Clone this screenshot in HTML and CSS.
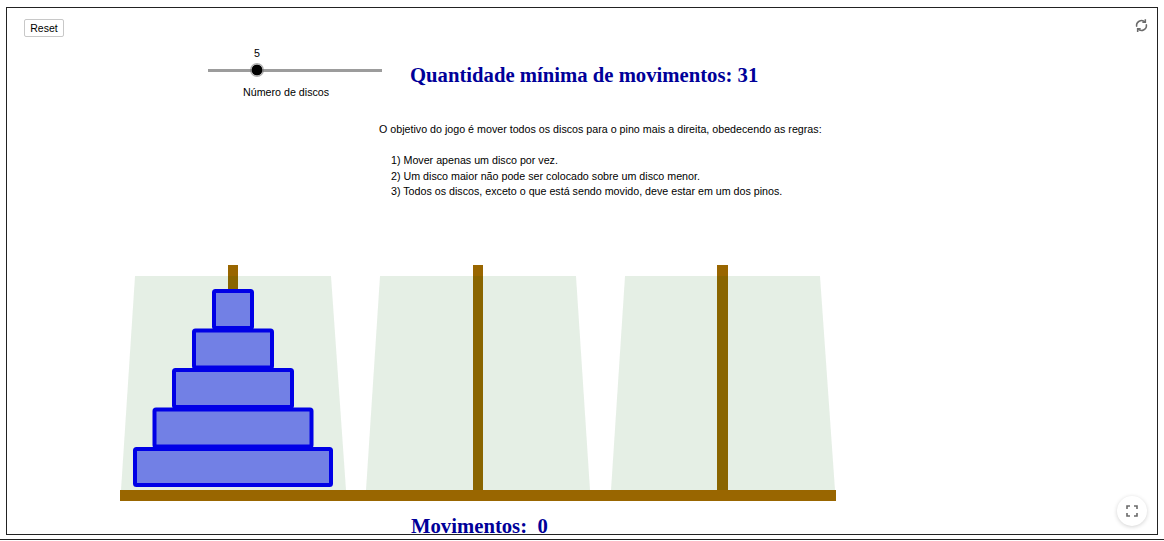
FILE: index.html
```html
<!DOCTYPE html>
<html lang="pt">
<head>
<meta charset="utf-8">
<title>Torre de Hanói</title>
<link rel="stylesheet" href="styles.css">
</head>
<body>
<div class="page">
  <div class="frame">
    <div class="toolbar">
      <button class="reset-btn" type="button">Reset</button>
    </div>

    <div class="header">
      <div class="slider">
        <div class="slider-value">5</div>
        <div class="slider-track"><span class="slider-knob"></span></div>
        <div class="slider-label">Número de discos</div>
      </div>
      <h1 class="title">Quantidade mínima de movimentos: 31</h1>
    </div>

    <div class="rules">
      <p class="line">O objetivo do jogo é mover todos os discos para o pino mais a direita, obedecendo as regras:</p>
      <p class="line blank">&nbsp;</p>
      <p class="line rule">1) Mover apenas um disco por vez.</p>
      <p class="line rule">2) Um disco maior não pode ser colocado sobre um disco menor.</p>
      <p class="line rule">3) Todos os discos, exceto o que está sendo movido, deve estar em um dos pinos.</p>
    </div>

    <svg class="board" width="716" height="236" viewBox="0 0 716 236" xmlns="http://www.w3.org/2000/svg">
      <!-- pegs -->
      <rect class="peg" x="108" y="0" width="10" height="26"/>
      <rect class="peg" x="353" y="0" width="10" height="226"/>
      <rect class="peg" x="597" y="0" width="11" height="226"/>
      <!-- trapezoid areas -->
      <polygon class="zone" points="15,11 211,11 226,225 1,225"/>
      <polygon class="zone" points="260,11 456,11 470,225 246,225"/>
      <polygon class="zone" points="505,11 700,11 715,225 491,225"/>
      <!-- base -->
      <rect class="base" x="0" y="225" width="716" height="11"/>
      <!-- disks -->
      <rect class="disk" x="15" y="184" width="196" height="36" rx="1.5"/>
      <rect class="disk" x="34.5" y="144.5" width="157" height="37" rx="1.5"/>
      <rect class="disk" x="54" y="105" width="118" height="37" rx="1.5"/>
      <rect class="disk" x="74" y="65.5" width="78" height="37" rx="1.5"/>
      <rect class="disk" x="94" y="26" width="38" height="37" rx="1.5"/>
    </svg>

    <div class="moves">Movimentos:  0</div>

    <button class="icon-btn refresh" type="button" aria-label="Recarregar">
      <svg width="17" height="17" viewBox="0 0 24 24" xmlns="http://www.w3.org/2000/svg">
        <path d="M5.3 13.8 A7 7 0 0 1 17 7.1" fill="none" stroke="#6b6b6b" stroke-width="2.2"/>
        <path d="M13.2 7.2 H17.4 V3" fill="none" stroke="#6b6b6b" stroke-width="2.2"/>
        <path d="M18.7 10.2 A7 7 0 0 1 7 16.9" fill="none" stroke="#6b6b6b" stroke-width="2.2"/>
        <path d="M10.8 16.8 H6.6 V21" fill="none" stroke="#6b6b6b" stroke-width="2.2"/>
      </svg>
    </button>

    <button class="icon-btn fullscreen" type="button" aria-label="Tela cheia">
      <svg width="12" height="12" viewBox="0 0 12 12" xmlns="http://www.w3.org/2000/svg">
        <path d="M1 4 V1 H4 M8 1 H11 V4 M11 8 V11 H8 M4 11 H1 V8" fill="none" stroke="#6b6b6b" stroke-width="1.6"/>
      </svg>
    </button>
  </div>
  <div class="bottom-rule"></div>
</div>
</body>
</html>
```

FILE: styles.css
```css
html, body {
  margin: 0;
  padding: 0;
  background: #ffffff;
}

.page {
  padding: 7px 0 0 6px;
  width: 1164px;
  box-sizing: border-box;
}

.frame {
  position: relative;
  width: 1152px;
  height: 528px;
  box-sizing: border-box;
  border: 1px solid #222;
  overflow: hidden;
  background: #fff;
  font-family: "Liberation Sans", Arial, sans-serif;
  color: #000;
}

.bottom-rule {
  margin-top: 4px;
  margin-left: -6px;
  width: 1164px;
  border-top: 1px solid #222;
}

/* toolbar */
.toolbar {
  padding: 11px 0 0 17px;
  height: 18px;
}

.reset-btn {
  display: block;
  width: 40px;
  height: 18px;
  padding: 0;
  margin: 0;
  background: #fff;
  border: 1px solid #c8c8c8;
  border-radius: 2px;
  font-family: "Liberation Sans", Arial, sans-serif;
  font-size: 10.5px;
  line-height: 16px;
  color: #000;
  text-align: center;
}

/* header: slider + title */
.header {
  display: flex;
  align-items: flex-start;
  height: 62px;
}

.slider {
  margin-left: 201px;
  width: 174px;
  margin-top: 10px;
  font-size: 10.7px;
}

.slider-value {
  line-height: 13px;
  height: 13px;
  padding-left: 46px;
}

.slider-track {
  height: 20px;
  display: flex;
  align-items: center;
  background: linear-gradient(#9c9c9c, #9c9c9c) center / 100% 3px no-repeat;
  border-radius: 2px;
}

.slider-knob {
  display: block;
  margin-left: 42px;
  width: 14px;
  height: 14px;
  border-radius: 50%;
  background: radial-gradient(circle, #000 0 5px, rgba(110, 110, 110, 0.55) 5.6px 7px);
}

.slider-label {
  margin-top: 6px;
  line-height: 13px;
  padding-left: 35px;
}

.title {
  margin: 26px 0 0 28px;
  font-family: "Liberation Serif", "Times New Roman", serif;
  font-weight: bold;
  font-size: 20.7px;
  line-height: 24px;
  color: #000099;
  white-space: nowrap;
}

/* rules text */
.rules {
  margin: 23px 0 0 372px;
  font-size: 10.7px;
}

.line {
  margin: 0;
  line-height: 15.5px;
  height: 15.5px;
  white-space: nowrap;
}

.rule {
  padding-left: 12px;
}

/* board */
.board {
  display: block;
  margin: 65.5px 0 0 113px;
}

.peg {
  fill: #996600;
}

.zone {
  fill: rgba(0, 100, 0, 0.1);
}

.base {
  fill: #996600;
}

.disk {
  fill: #7280e5;
  stroke: #0000e6;
  stroke-width: 4;
  stroke-linejoin: round;
}

/* moves counter */
.moves {
  margin: 13px 0 0 404px;
  font-family: "Liberation Serif", "Times New Roman", serif;
  font-weight: bold;
  font-size: 20.7px;
  line-height: 24px;
  color: #000099;
  white-space: pre;
}

/* overlay icons */
.icon-btn {
  position: absolute;
  padding: 0;
  margin: 0;
  border: none;
  background: transparent;
  display: flex;
  align-items: center;
  justify-content: center;
}

.refresh {
  top: 8px;
  right: 7px;
  width: 18px;
  height: 18px;
}

.fullscreen {
  right: 10px;
  bottom: 8px;
  width: 30px;
  height: 30px;
  border-radius: 50%;
  background: #fff;
  box-shadow: 0 1px 4px rgba(0, 0, 0, 0.18);
}
```
